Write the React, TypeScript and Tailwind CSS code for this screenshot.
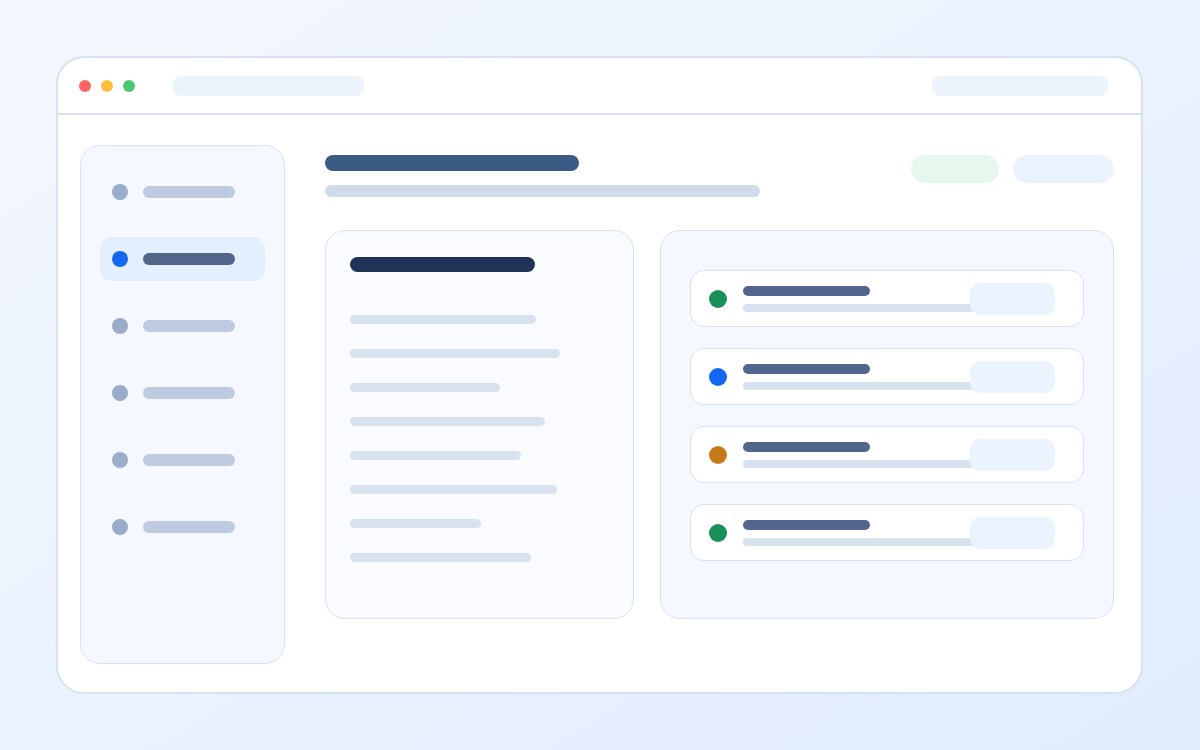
import React from "react";

const navItems = [false, true, false, false, false, false];
const lineWidths = [186, 210, 150, 195, 171, 207, 131, 181];
const rowDots = ["bg-[#1a8f58]", "bg-[#1566f0]", "bg-[#c47a17]", "bg-[#1a8f58]"];

const SidebarItem = ({ active }: { active: boolean }) => (
  <div
    className={
      "flex items-center h-[44px] pl-[12px] gap-[15px] rounded-[12px] " +
      (active ? "bg-[#e4effd]" : "")
    }
  >
    <div className={"w-[16px] h-[16px] rounded-full " + (active ? "bg-[#1566f0]" : "bg-[#9aacc8]")} />
    <div className={"w-[92px] h-[12px] rounded-full " + (active ? "bg-[#52668b]" : "bg-[#bdcadf]")} />
  </div>
);

const ListRow = ({ dot }: { dot: string }) => (
  <div className="relative flex items-center h-[57px] pl-[18px] gap-[16px] rounded-[14px] border border-[#d5e2f3] bg-white">
    <div className={"w-[18px] h-[18px] rounded-full shrink-0 mt-[1px] " + dot} />
    <div className="flex flex-col gap-[8px]">
      <div className="w-[127px] h-[10px] rounded-full bg-[#52668b]" />
      <div className="w-[240px] h-[8px] rounded-full bg-[#d8e2ee]" />
    </div>
    <div className="absolute right-[28px] top-[12px] w-[85px] h-[32px] rounded-[10px] bg-[#ebf3fe]" />
  </div>
);

export default function App() {
  return (
    <div className="w-[1200px] h-[750px] p-[56px] bg-gradient-to-br from-[#f4f8fe] to-[#e0ecfd]">
      <div className="w-[1087px] h-[638px] flex flex-col rounded-[28px] border-2 border-[#d6e2f3] bg-white overflow-hidden">
        {/* Title bar */}
        <div className="h-[57px] shrink-0 flex items-center pl-[21px] pr-[32px] border-b-2 border-[#d6e2f3]">
          <div className="flex items-center gap-[10px]">
            <div className="w-[12px] h-[12px] rounded-full bg-[#ff6363]" />
            <div className="w-[12px] h-[12px] rounded-full bg-[#ffbf3c]" />
            <div className="w-[12px] h-[12px] rounded-full bg-[#4cc774]" />
          </div>
          <div className="ml-[37px] w-[193px] h-[20px] rounded-full bg-[#ebf3fc]" />
          <div className="ml-auto w-[178px] h-[20px] rounded-full bg-[#ebf3fc]" />
        </div>

        {/* Body */}
        <div className="flex flex-1 pt-[30px] pl-[22px] pr-[27px] pb-[27px] gap-[40px]">
          <div className="w-[205px] h-[519px] shrink-0 rounded-[20px] border border-[#d5e2f3] bg-[#f5f9ff] px-[19px] pt-[24px] flex flex-col gap-[23px]">
            {navItems.map((active, i) => (
              <SidebarItem key={i} active={active} />
            ))}
          </div>

          <div className="flex-1 flex flex-col pt-[10px]">
            <div className="flex items-start justify-between">
              <div className="flex flex-col gap-[14px]">
                <div className="w-[254px] h-[16px] rounded-full bg-[#3b5a84]" />
                <div className="w-[435px] h-[12px] rounded-full bg-[#cfdbea]" />
              </div>
              <div className="flex gap-[14px]">
                <div className="w-[88px] h-[28px] rounded-full bg-[#e6f7ee]" />
                <div className="w-[101px] h-[28px] rounded-full bg-[#eaf2fd]" />
              </div>
            </div>

            <div className="flex gap-[26px] mt-[33px]">
              <div className="w-[309px] h-[389px] rounded-[20px] border border-[#d5e2f3] bg-[#f9fbff] pl-[24px] pt-[26px]">
                <div className="w-[185px] h-[15px] rounded-full bg-[#1e3357]" />
                <div className="flex flex-col gap-[25px] mt-[43px]">
                  {lineWidths.map((w, i) => (
                    <div key={i} className="h-[9px] rounded-full bg-[#d8e2ee]" style={{ width: w }} />
                  ))}
                </div>
              </div>

              <div className="w-[454px] h-[389px] rounded-[20px] border border-[#d5e2f3] bg-[#f5f9ff] px-[29px] pt-[39px] flex flex-col gap-[21px]">
                {rowDots.map((d, i) => (
                  <ListRow key={i} dot={d} />
                ))}
              </div>
            </div>
          </div>
        </div>
      </div>
    </div>
  );
}
